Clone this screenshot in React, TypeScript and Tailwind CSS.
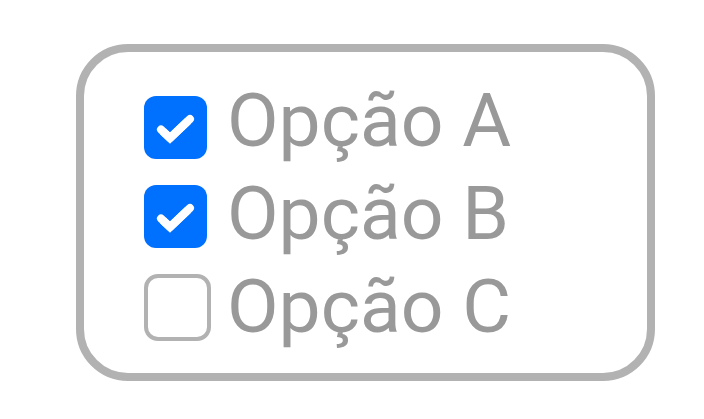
import { useState } from "react";

const options = [
  { id: "a", label: "Opção A", checked: true },
  { id: "b", label: "Opção B", checked: true },
  { id: "c", label: "Opção C", checked: false },
];

function CheckBox({ id, initial }: { id: string; initial: boolean }) {
  const [on, setOn] = useState(initial);
  return (
    <span className="relative">
      <input
        id={id}
        type="checkbox"
        checked={on}
        onChange={(e) => setOn(e.target.checked)}
        className="peer block size-[67px] appearance-none rounded-[14px] border-4 border-[#b2b2b2] bg-white checked:size-[63px] checked:rounded-xl checked:border-0 checked:bg-[#0070ff]"
      />
      <svg
        viewBox="0 0 63 63"
        aria-hidden="true"
        className="pointer-events-none absolute inset-0 hidden size-[63px] peer-checked:block"
      >
        <path d="M26 42 L17 33.5 M26 42 L46 23" stroke="white" strokeWidth="8" strokeLinecap="round" />
        <path d="M19 35.5 L26 42.2 L44 25" fill="none" stroke="white" strokeWidth="8" strokeLinejoin="miter" />
      </svg>
    </span>
  );
}

export default function App() {
  return (
    <main className="bg-white pt-11 pr-[49px] pl-[76px] font-[Roboto,sans-serif]">
      <fieldset
        aria-label="Opções"
        className="rounded-[52px] border-8 border-[#b2b2b2] pt-[22px] pb-5 pl-[60px]"
      >
        <div className="flex gap-4">
          <div className="flex w-[67px] shrink-0 flex-col gap-[26px] pt-[22px]">
            {options.map((o) => (
              <CheckBox key={o.id} id={o.id} initial={o.checked} />
            ))}
          </div>
          <div className="flex flex-col">
            {options.map((o) => (
              <label
                key={o.id}
                htmlFor={o.id}
                className="text-[75px] leading-[93px] whitespace-nowrap text-[#999999]"
              >
                {o.label}
              </label>
            ))}
          </div>
        </div>
      </fieldset>
    </main>
  );
}
